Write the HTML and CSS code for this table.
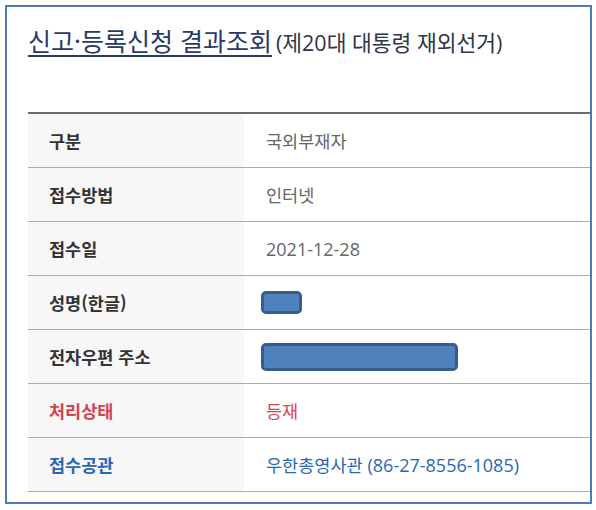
FILE: index.html
```html
<!DOCTYPE html>
<html lang="ko">
<head>
<meta charset="utf-8">
<title>신고·등록신청 결과조회</title>
<link rel="stylesheet" href="styles.css">
</head>
<body>
<div class="frame">
  <h1 class="title"><span class="title-main">신고·등록신청 결과조회</span> <span class="title-sub">(제20대 대통령 재외선거)</span></h1>
  <div class="table">
    <div class="row"><div class="th">구분</div><div class="td">국외부재자</div></div>
    <div class="row"><div class="th">접수방법</div><div class="td">인터넷</div></div>
    <div class="row"><div class="th">접수일</div><div class="td"><span class="num">2021-12-28</span></div></div>
    <div class="row"><div class="th">성명(한글)</div><div class="td"><span class="redact redact-name"></span></div></div>
    <div class="row"><div class="th">전자우편 주소</div><div class="td"><span class="redact redact-mail"></span></div></div>
    <div class="row row-red"><div class="th">처리상태</div><div class="td">등재</div></div>
    <div class="row row-blue"><div class="th">접수공관</div><div class="td">우한총영사관&nbsp;<span class="num">(86-27-8556-1085)</span></div></div>
  </div>
</div>
</body>
</html>
```
FILE: styles.css
```css
html, body {
  margin: 0;
  padding: 0;
  background: #ffffff;
}
body {
  font-family: "Noto Sans CJK KR", "Noto Sans", sans-serif;
  padding: 5px 4px 0 5px;
}
.frame {
  height: 495px;
  width: 562px;
  border: 2px solid #4a7ebb;
  overflow: hidden;
  padding-left: 21px;
}
.title {
  margin: 0;
  padding-top: 12px;
  height: 105px;
  box-sizing: border-box;
  font-weight: 400;
  line-height: 36px;
  white-space: nowrap;
}
.title-main {
  font-size: 25px;
  color: #283a66;
  text-decoration: underline;
  text-decoration-thickness: 2px;
  text-underline-offset: 4px;
}
.title-sub {
  font-family: "Open Sans", "Noto Sans CJK KR", sans-serif;
  font-size: 21.5px;
  color: #2d3548;
  margin-left: -5px;
}
.table {
  border-top: 2px solid #6b6b6b;
  width: 580px;
}
.row {
  display: grid;
  grid-template-columns: 216px 1fr;
  height: 54px;
  border-bottom: 1px solid #acacac;
  box-sizing: border-box;
}
.th {
  background: #f7f7f7;
  display: flex;
  align-items: center;
  padding-left: 21px;
  font-size: 17.5px;
  font-weight: 700;
  color: #333333;
}
.td {
  display: flex;
  align-items: center;
  padding-left: 22px;
  font-size: 17.5px;
  color: #666666;
  white-space: nowrap;
}
.num {
  font-family: "Open Sans", "Noto Sans CJK KR", sans-serif;
  font-size: 18px;
}
.row-red .th, .row-red .td { color: #d8414f; }
.row-blue .th, .row-blue .td { color: #2768b6; }
.redact {
  display: inline-block;
  box-sizing: border-box;
  background: #4f81bd;
  border: 3px solid #385d8a;
  border-radius: 5px;
  margin-left: -5px;
}
.redact-name {
  width: 41px;
  height: 23px;
}
.redact-mail {
  width: 197px;
  height: 28px;
}
```
